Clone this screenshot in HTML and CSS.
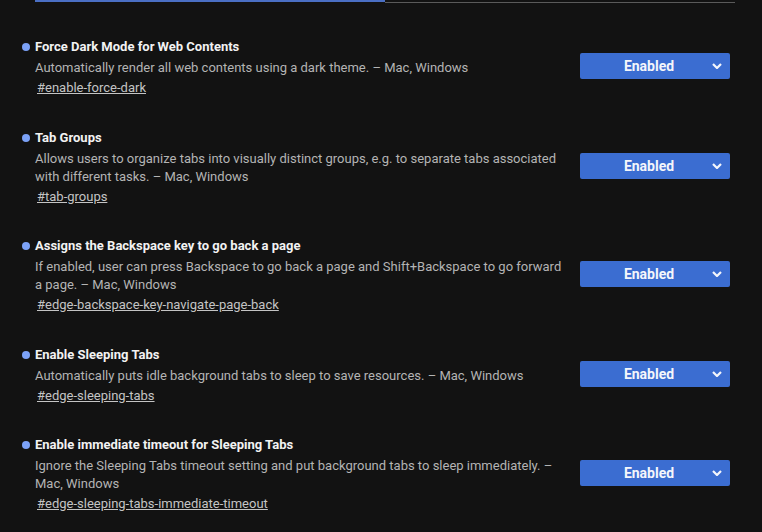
FILE: index.html
```html
<!DOCTYPE html>
<html lang="en">
<head>
    <meta charset="UTF-8">
    <meta name="viewport" content="width=device-width, initial-scale=1.0">
    <title>Experiments</title>
    <link rel="stylesheet" href="styles.css">
</head>
<body>
    <div class="tabs">
        <div class="tab active"></div>
        <div class="tab"></div>
    </div>

    <div class="experiments">
        <div class="experiment">
            <div class="info">
                <div class="name"><span class="dot"></span>Force Dark Mode for Web Contents</div>
                <div class="desc">Automatically render all web contents using a dark theme. – Mac, Windows</div>
                <a href="#" class="permalink">#enable-force-dark</a>
            </div>
            <div class="select">Enabled <svg class="chevron" viewBox="0 0 10 6"><path d="M1 1l4 4 4-4"/></svg></div>
        </div>

        <div class="experiment">
            <div class="info">
                <div class="name"><span class="dot"></span>Tab Groups</div>
                <div class="desc">Allows users to organize tabs into visually distinct groups, e.g. to separate tabs associated with different tasks. – Mac, Windows</div>
                <a href="#" class="permalink">#tab-groups</a>
            </div>
            <div class="select">Enabled <svg class="chevron" viewBox="0 0 10 6"><path d="M1 1l4 4 4-4"/></svg></div>
        </div>

        <div class="experiment">
            <div class="info">
                <div class="name"><span class="dot"></span>Assigns the Backspace key to go back a page</div>
                <div class="desc">If enabled, user can press Backspace to go back a page and Shift+Backspace to go forward a page. – Mac, Windows</div>
                <a href="#" class="permalink">#edge-backspace-key-navigate-page-back</a>
            </div>
            <div class="select">Enabled <svg class="chevron" viewBox="0 0 10 6"><path d="M1 1l4 4 4-4"/></svg></div>
        </div>

        <div class="experiment">
            <div class="info">
                <div class="name"><span class="dot"></span>Enable Sleeping Tabs</div>
                <div class="desc">Automatically puts idle background tabs to sleep to save resources. – Mac, Windows</div>
                <a href="#" class="permalink">#edge-sleeping-tabs</a>
            </div>
            <div class="select">Enabled <svg class="chevron" viewBox="0 0 10 6"><path d="M1 1l4 4 4-4"/></svg></div>
        </div>

        <div class="experiment">
            <div class="info">
                <div class="name"><span class="dot"></span>Enable immediate timeout for Sleeping Tabs</div>
                <div class="desc">Ignore the Sleeping Tabs timeout setting and put background tabs to sleep immediately. – Mac, Windows</div>
                <a href="#" class="permalink">#edge-sleeping-tabs-immediate-timeout</a>
            </div>
            <div class="select">Enabled <svg class="chevron" viewBox="0 0 10 6"><path d="M1 1l4 4 4-4"/></svg></div>
        </div>
    </div>
</body>
</html>
```

FILE: styles.css
```css
body {
    margin: 0;
    background-color: #121212;
    font-family: Roboto, "Liberation Sans", Arial, sans-serif;
    font-size: 13px;
    color: #b4b4b4;
}
.tabs {
    display: flex;
    margin: 0 27px 0 35px;
    height: 3px;
}
.tab {
    flex: 1;
    border-bottom: 1px solid #5a5a5a;
}
.tab.active {
    border-bottom: 2px solid #4a6fc4;
    margin-bottom: 1px;
}
.experiments {
    padding: 34px 32px 0 22px;
}
.experiment {
    display: flex;
    align-items: center;
    margin-bottom: 29.5px;
}
.info {
    width: 545px;
    margin-right: 13px;
}
.name {
    display: flex;
    align-items: center;
    line-height: 20px;
    font-weight: bold;
    color: #f2f2f2;
}
.dot {
    width: 8px;
    height: 8px;
    border-radius: 50%;
    background-color: #7ba1f6;
    margin-right: 5px;
}
.desc {
    margin: 2px 0 0 13px;
    line-height: 18px;
}
.permalink {
    display: inline-block;
    margin: 1px 0 0 15px;
    line-height: 20px;
    color: #c4c4c4;
}
.select {
    position: relative;
    width: 150px;
    height: 26px;
    margin-bottom: 3px;
    line-height: 26px;
    border-radius: 2px;
    background-color: #3b6dd1;
    color: #f4f6fb;
    font-size: 14px;
    font-weight: bold;
    text-align: center;
    box-sizing: border-box;
    padding-right: 12px;
}
.chevron {
    position: absolute;
    right: 8px;
    top: 10px;
    width: 10px;
    height: 6px;
    fill: none;
    stroke: #f4f6fb;
    stroke-width: 2.2;
}
```
